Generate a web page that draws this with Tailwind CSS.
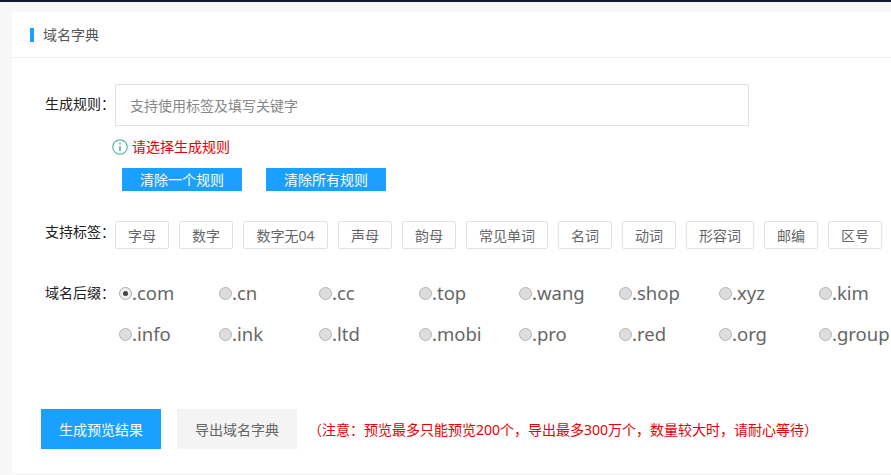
<!DOCTYPE html>
<html lang="zh-CN">
  <head>
    <meta charset="UTF-8" />
    <script src="https://cdn.jsdelivr.net/npm/@tailwindcss/browser@4"></script>
    <title>域名字典</title>
  </head>
  <body class="h-[475px] w-[891px] overflow-hidden bg-[#f7f7f7] font-['Noto_Sans','Noto_Sans_CJK_SC',sans-serif]">
    <div class="h-[2px] bg-[#14182b]"></div>
    <main class="mt-[10px] ml-[12px] h-[461px] bg-white">
      <!-- title -->
      <div class="flex h-[46px] items-center border-b border-[#eeeeee] pl-[18px]">
        <span class="h-[14px] w-[4px] bg-[#1aa1ff]"></span>
        <h2 class="ml-[9px] text-[14px] text-[#555555]">域名字典</h2>
      </div>

      <!-- rule -->
      <div class="mt-[26px] flex pl-[33px]">
        <label class="w-[70px] shrink-0 whitespace-nowrap pt-[10px] text-[14px] leading-[20px] text-[#222222]">生成规则：</label>
        <input
          type="text"
          placeholder="支持使用标签及填写关键字"
          class="h-[42px] w-[634px] border border-[#e2e2e2] px-[14px] text-[14px] placeholder:text-[#888888]"
        />
      </div>
      <div class="mt-[11px] flex items-center pl-[100px]">
        <svg class="h-[16px] w-[16px]" viewBox="0 0 16 16" fill="none" stroke="#5fb3a6">
          <circle cx="8" cy="8" r="7.2" stroke-width="1.2" />
          <path d="M8 7v5" stroke-width="1.6" />
          <path d="M8 3.7v1.8" stroke-width="1.6" />
        </svg>
        <span class="ml-[4px] text-[14px] leading-[20px] text-[#e60000]">请选择生成规则</span>
      </div>
      <div class="mt-[11px] flex gap-[24px] pl-[110px]">
        <button class="h-[23px] w-[120px] bg-[#1aa1ff] text-[14px] text-white">清除一个规则</button>
        <button class="h-[23px] w-[120px] bg-[#1aa1ff] text-[14px] text-white">清除所有规则</button>
      </div>

      <!-- tags -->
      <div class="mt-[30px] flex pl-[33px]">
        <label class="w-[70px] shrink-0 whitespace-nowrap text-[14px] leading-[22px] text-[#222222]">支持标签：</label>
        <div class="flex gap-[10px] text-[14px] text-[#666666]">
          <span class="flex h-[28px] w-[54px] items-center justify-center rounded-[2px] border border-[#e2e2e2]">字母</span>
          <span class="flex h-[28px] w-[54px] items-center justify-center rounded-[2px] border border-[#e2e2e2]">数字</span>
          <span class="flex h-[28px] w-[85px] items-center justify-center rounded-[2px] border border-[#e2e2e2]">数字无04</span>
          <span class="flex h-[28px] w-[54px] items-center justify-center rounded-[2px] border border-[#e2e2e2]">声母</span>
          <span class="flex h-[28px] w-[54px] items-center justify-center rounded-[2px] border border-[#e2e2e2]">韵母</span>
          <span class="flex h-[28px] w-[82px] items-center justify-center rounded-[2px] border border-[#e2e2e2]">常见单词</span>
          <span class="flex h-[28px] w-[54px] items-center justify-center rounded-[2px] border border-[#e2e2e2]">名词</span>
          <span class="flex h-[28px] w-[54px] items-center justify-center rounded-[2px] border border-[#e2e2e2]">动词</span>
          <span class="flex h-[28px] w-[68px] items-center justify-center rounded-[2px] border border-[#e2e2e2]">形容词</span>
          <span class="flex h-[28px] w-[54px] items-center justify-center rounded-[2px] border border-[#e2e2e2]">邮编</span>
          <span class="flex h-[28px] w-[54px] items-center justify-center rounded-[2px] border border-[#e2e2e2]">区号</span>
        </div>
      </div>

      <!-- suffixes -->
      <div class="mt-[30px] flex pl-[33px]">
        <label class="w-[74px] shrink-0 whitespace-nowrap text-[14px] leading-[28px] text-[#222222]">域名后缀：</label>
        <div class="grid grid-cols-[repeat(8,100px)] gap-y-[13px] text-[18.5px] leading-[28px] text-[#666666]">
          <label class="flex items-center"><span class="flex h-[13px] w-[13px] items-center justify-center rounded-full border border-[#aaaaaa] bg-[#eeeeee]"><span class="h-[5px] w-[5px] rounded-full bg-[#444444]"></span></span>.com</label>
          <label class="flex items-center"><span class="h-[13px] w-[13px] rounded-full border border-[#b4b4b4] bg-[#dddddd]"></span>.cn</label>
          <label class="flex items-center"><span class="h-[13px] w-[13px] rounded-full border border-[#b4b4b4] bg-[#dddddd]"></span>.cc</label>
          <label class="flex items-center"><span class="h-[13px] w-[13px] rounded-full border border-[#b4b4b4] bg-[#dddddd]"></span>.top</label>
          <label class="flex items-center"><span class="h-[13px] w-[13px] rounded-full border border-[#b4b4b4] bg-[#dddddd]"></span>.wang</label>
          <label class="flex items-center"><span class="h-[13px] w-[13px] rounded-full border border-[#b4b4b4] bg-[#dddddd]"></span>.shop</label>
          <label class="flex items-center"><span class="h-[13px] w-[13px] rounded-full border border-[#b4b4b4] bg-[#dddddd]"></span>.xyz</label>
          <label class="flex items-center"><span class="h-[13px] w-[13px] rounded-full border border-[#b4b4b4] bg-[#dddddd]"></span>.kim</label>
          <label class="flex items-center"><span class="h-[13px] w-[13px] rounded-full border border-[#b4b4b4] bg-[#dddddd]"></span>.info</label>
          <label class="flex items-center"><span class="h-[13px] w-[13px] rounded-full border border-[#b4b4b4] bg-[#dddddd]"></span>.ink</label>
          <label class="flex items-center"><span class="h-[13px] w-[13px] rounded-full border border-[#b4b4b4] bg-[#dddddd]"></span>.ltd</label>
          <label class="flex items-center"><span class="h-[13px] w-[13px] rounded-full border border-[#b4b4b4] bg-[#dddddd]"></span>.mobi</label>
          <label class="flex items-center"><span class="h-[13px] w-[13px] rounded-full border border-[#b4b4b4] bg-[#dddddd]"></span>.pro</label>
          <label class="flex items-center"><span class="h-[13px] w-[13px] rounded-full border border-[#b4b4b4] bg-[#dddddd]"></span>.red</label>
          <label class="flex items-center"><span class="h-[13px] w-[13px] rounded-full border border-[#b4b4b4] bg-[#dddddd]"></span>.org</label>
          <label class="flex items-center"><span class="h-[13px] w-[13px] rounded-full border border-[#b4b4b4] bg-[#dddddd]"></span>.group</label>
        </div>
      </div>

      <!-- actions -->
      <div class="mt-[61px] flex items-center pl-[29px]">
        <button class="h-[40px] w-[120px] bg-[#1aa1ff] text-[14px] text-white">生成预览结果</button>
        <button class="ml-[16px] h-[40px] w-[120px] bg-[#f4f4f4] text-[14px] text-[#666666]">导出域名字典</button>
        <span class="ml-[11px] whitespace-nowrap text-[14px] text-[#e60000]">（注意：预览最多只能预览200个，导出最多300万个，数量较大时，请耐心等待）</span>
      </div>
    </main>
  </body>
</html>
